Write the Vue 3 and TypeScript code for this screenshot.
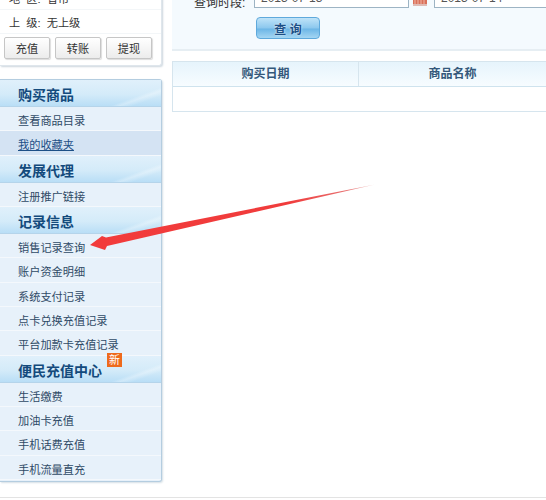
<script setup lang="ts">
interface Item { label: string; link?: boolean; active?: boolean }
interface Group { title: string; badge?: string; items: Item[] }
const groups: Group[] = [
  { title: '购买商品', items: [{ label: '查看商品目录' }, { label: '我的收藏夹', link: true, active: true }] },
  { title: '发展代理', items: [{ label: '注册推广链接' }] },
  { title: '记录信息', items: [{ label: '销售记录查询' }, { label: '账户资金明细' }, { label: '系统支付记录' }, { label: '点卡兑换充值记录' }, { label: '平台加款卡充值记录' }] },
  { title: '便民充值中心', badge: '新', items: [{ label: '生活缴费' }, { label: '加油卡充值' }, { label: '手机话费充值' }, { label: '手机流量直充' }] },
]
const actions = ['充值', '转账', '提现']
const columns = ['购买日期', '商品名称']
</script>

<template>
  <div class="page">
    <div class="columns">
      <aside class="side">
        <section class="account">
          <div class="row">地 区: 省市</div>
          <div class="row">上 级: 无上级</div>
          <div class="actions">
            <button v-for="a in actions" :key="a" class="act">{{ a }}</button>
          </div>
        </section>
        <nav class="menu">
          <template v-for="g in groups" :key="g.title">
            <h3 class="head">
              <span>{{ g.title }}</span>
              <sup v-if="g.badge" class="badge">{{ g.badge }}</sup>
            </h3>
            <div v-for="i in g.items" :key="i.label" class="item" :class="{ active: i.active, link: i.link }">{{ i.label }}</div>
          </template>
        </nav>
      </aside>
      <main class="main">
        <section class="query">
          <div class="dates">
            <span class="lab">查询时段:</span>
            <span class="input">2013-07-13</span>
            <svg class="cal" width="16" height="6" viewBox="0 0 16 6"><rect x="1" y="0" width="14" height="4" fill="#d9705a"/><path d="M3 0v4M6 0v4M9 0v4M12 0v4" stroke="#f0b5a6"/><path d="M1 5h14" stroke="#c97d6c"/></svg>
            <span class="input second">2013-07-14</span>
          </div>
          <button class="search">查 询</button>
        </section>
        <div class="table">
          <div class="tr">
            <div v-for="c in columns" :key="c" class="th">{{ c }}</div>
          </div>
          <div class="empty"></div>
        </div>
      </main>
    </div>
    <div class="foot"></div>
    <svg class="arrow" width="546" height="500" viewBox="0 0 546 500">
      <defs>
        <linearGradient id="fade" x1="90" y1="245" x2="375" y2="185" gradientUnits="userSpaceOnUse">
          <stop offset="0" stop-color="#f23b3b"/>
          <stop offset="0.7" stop-color="#f03c3c"/>
          <stop offset="0.9" stop-color="#e87070"/>
          <stop offset="1" stop-color="#eec4c4"/>
        </linearGradient>
      </defs>
      <path d="M90 245 L102 236 L106 237.5 L375 184.5 L107 246 L105 250 Z" fill="url(#fade)"/>
    </svg>
  </div>
</template>

<style>
html, body { background: #fff; }
</style>
<style scoped>
.page { position: relative; width: 546px; height: 500px; overflow: hidden; background: #fff; font-family: "Liberation Sans", "Noto Sans CJK SC", sans-serif; font-size: 11.2px; color: #333; }
.columns { display: flex; align-items: flex-start; gap: 10px; height: 497px; overflow: hidden; }
.side { width: 162px; flex: none; margin-top: -14px; display: flex; flex-direction: column; gap: 13px; }
.account { border-right: 1px solid #dfe6ec; border-bottom: 1px solid #dfe6ec; border-radius: 0 0 3px 0; box-shadow: 1px 1px 2px #ccd6de; background: #fff; height: 80px; box-sizing: border-box; }
.row { height: 24px; box-sizing: border-box; line-height: 26px; padding-left: 9px; border-bottom: 1px solid #f3f6f8; color: #333; word-spacing: 3px; }
.actions { display: flex; gap: 5px; padding: 3px 0 0 4px; }
.act { width: 46px; height: 22px; padding: 0; border: 1px solid #c6c6c6; border-radius: 2px; background: linear-gradient(#fff, #ececec); box-shadow: 1px 1px 1px #ddd; font: 11.2px "Liberation Sans", "Noto Sans CJK SC", sans-serif; color: #333; }
.menu { border: 1px solid #b4cde0; border-left: 0; border-radius: 0 3px 3px 0; box-shadow: 1px 1px 2px #d5dfe6; background: #e7f1fa; height: 403px; box-sizing: border-box; display: flex; flex-direction: column; }
.head { margin: 0; flex: none; height: 26.9px; line-height: 31px; padding-left: 18px; font-size: 14px; font-weight: 700; color: #134a7c; background: linear-gradient(160deg, transparent 78%, rgba(255,255,255,.3) 82%, transparent 88%), linear-gradient(#e0f0fb, #d4ebf9 55%, #b9def6); border-bottom: 1px solid #b5d4ea; box-sizing: border-box; position: relative; }
.badge { position: absolute; left: 107px; top: -3px; width: 15px; height: 14px; line-height: 14px; background: #ee6a1c; color: #fff; font-size: 11px; font-weight: 400; text-align: center; }
.item { flex: none; height: 24.4px; line-height: 28px; padding-left: 18px; color: #2f4a66; border-bottom: 1px solid #f4f8fc; box-sizing: border-box; overflow: hidden; }
.item.active { background: #d4e3f3; }
.item.link { text-decoration: underline; color: #1c4f86; }
.main { flex: 1; min-width: 0; display: flex; flex-direction: column; gap: 10px; }
.query { height: 51px; box-sizing: border-box; background: #f4fafe; border-bottom: 2px solid #e6eef3; padding-left: 84px; }
.dates { display: flex; align-items: flex-end; height: 8px; margin-left: -62px; white-space: nowrap; }
.lab { width: 60px; flex: none; color: #333; font-size: 12px; line-height: 16px; margin-bottom: -3px; }
.input { flex: none; width: 155px; height: 20px; box-sizing: border-box; border: 1px solid #9db4c4; background: #fff; padding-left: 6px; line-height: 18px; color: #555; font-size: 12px; }
.input.second { margin-left: 6px; width: 140px; }
.cal { flex: none; margin-left: 3px; align-self: flex-start; }
.search { display: block; width: 64px; height: 22px; margin-top: 9px; padding: 0; border: 1px solid #5ea9dc; border-radius: 4px; background: linear-gradient(#bfe3f8, #8cc8ee 50%, #6db6e6 55%, #a4d6f3); color: #1c4f86; font: 700 12px "Liberation Sans", "Noto Sans CJK SC", sans-serif; text-shadow: 0 0 2px #fff; }
.table { border: 1px solid #d6e5ee; border-right: 0; }
.tr { display: grid; grid-template-columns: 186px 1fr; height: 25px; box-sizing: border-box; background: linear-gradient(#e6f4fc, #f7fcff); border-bottom: 1px solid #cfe3ee; font-size: 12px; }
.th { text-align: center; line-height: 24px; font-weight: 700; color: #34587a; border-right: 1px solid #d6e5ee; }
.th:last-child { border-right: 0; }
.empty { height: 24px; background: #fff; }
.foot { height: 1px; background: #e3e3e3; }
.arrow { position: absolute; left: 0; top: 0; pointer-events: none; }
</style>
